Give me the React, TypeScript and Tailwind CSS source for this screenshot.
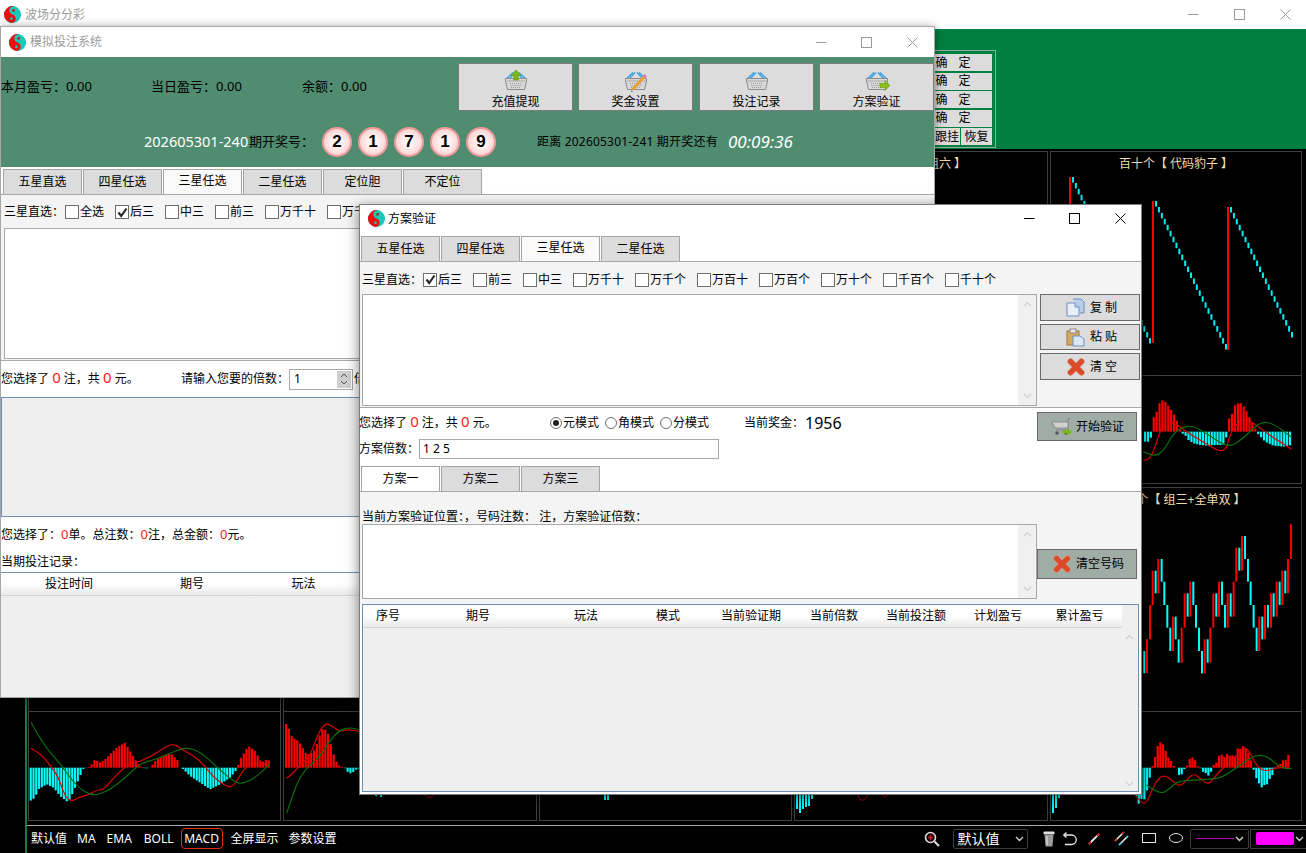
import React from "react";

type P = [number, number];

const C = "\uFF1A";
const D = "\uFF0C";

const interp = (pts: P[], x: number) => {
  if (x <= pts[0][0]) return pts[0][1];
  for (let i = 1; i < pts.length; i++) {
    if (x <= pts[i][0]) {
      const [a, b] = pts[i - 1];
      const [c, d] = pts[i];
      return b + ((d - b) * (x - a)) / (c - a);
    }
  }
  return pts[pts.length - 1][1];
};

const smooth = (pts: P[]) => {
  let d = `M${pts[0][0]} ${pts[0][1]}`;
  for (let i = 1; i < pts.length - 1; i++) {
    const mx = (pts[i][0] + pts[i + 1][0]) / 2;
    const my = (pts[i][1] + pts[i + 1][1]) / 2;
    d += ` Q${pts[i][0]} ${pts[i][1]} ${mx} ${my}`;
  }
  const l = pts[pts.length - 1];
  return d + ` L${l[0]} ${l[1]}`;
};

function Canvas({ x, y, w, h, children }: { x: number; y: number; w: number; h: number; children?: React.ReactNode }) {
  return (
    <svg className="block" width={w} height={h} viewBox={`${x} ${y} ${w} ${h}`}>
      {children}
    </svg>
  );
}

function Macd({
  ox, oy, axis, runs, red, green,
}: {
  ox: number; oy: number; axis: number;
  runs: { from: number; to: number; step: number; pts: P[] }[];
  red?: P[]; green?: P[];
}) {
  const rects: React.ReactNode[] = [];
  runs.forEach((r, ri) => {
    for (let zx = r.from, i = 0; zx <= r.to; zx += r.step, i++) {
      const v = interp(r.pts, zx);
      rects.push(
        <rect key={`${ri}-${i}`} x={zx - 3} width={6.5} y={v > 0 ? axis - v : axis} height={Math.abs(v)} fill={v > 0 ? "#ff0000" : "#00ffff"} />
      );
    }
  });
  return (
    <g transform={`translate(${ox} ${oy}) scale(0.3333)`}>
      {rects}
      {red && <path d={smooth(red)} fill="none" stroke="#e00000" strokeWidth={3.5} />}
      {green && <path d={smooth(green)} fill="none" stroke="#0a700a" strokeWidth={3.5} />}
    </g>
  );
}

function Stairs({ x0, y0, x1, y1 }: { x0: number; y0: number; x1: number; y1: number }) {
  const n = Math.round((x1 - x0) / 2.9);
  const out: React.ReactNode[] = [];
  for (let i = 0; i <= n; i++) {
    out.push(<rect key={i} x={x0 + ((x1 - x0) * i) / n} y={y0 + ((y1 - y0) * i) / n} width={2} height={5.5} fill="#00eef4" />);
  }
  return <>{out}</>;
}

const candles: [number, number, number, 0 | 1][] = [
  [343,513,580,0],[351,478,580,1],[360,375,478,1],[368,272,375,1],[377,272,340,0],[385,237,340,1],[395,237,305,0],[403,305,375,0],[412,375,443,0],[421,443,513,0],[429,410,513,1],[437,410,478,0],[446,478,548,0],[455,443,548,1],[464,340,443,1],[473,340,410,0],[481,305,410,1],[490,305,375,0],[498,375,443,0],[507,443,513,0],[516,513,580,0],[524,478,580,1],[533,478,548,0],[541,443,548,1],[550,340,443,1],[559,340,410,0],[567,305,410,1],[576,305,375,0],[585,375,443,0],[593,340,443,1],[602,340,410,0],[611,305,410,1],[619,203,305,1],[628,203,272,0],[636,168,272,1],[645,168,237,0],[654,237,305,0],[662,305,375,0],[671,375,443,0],[680,443,513,0],[688,410,513,1],[697,410,478,0],[705,375,478,1],[714,375,443,0],[723,340,443,1],[731,340,410,0],[740,305,410,1],[749,305,375,0],[757,272,375,1],[766,272,340,0],[774,237,340,1],[783,133,237,1],
];

function Panel({ title, titleClass, main, macd, x, y }: { title?: string; titleClass?: string; main?: React.ReactNode; macd?: React.ReactNode; x: number; y: number }) {
  return (
    <div className="flex flex-col border border-[#404040] bg-black overflow-hidden">
      <div className={`h-[23px] shrink-0 flex items-center justify-center text-[12px] text-[#f2dcae] whitespace-nowrap ${titleClass ?? ""}`}>{title}</div>
      <div className="h-[200px] shrink-0 overflow-hidden">
        <Canvas x={x} y={y + 24} w={252} h={200}>{main}</Canvas>
      </div>
      <div className="h-px shrink-0 bg-[#404040]" />
      <div className="flex-1 overflow-hidden">
        <Canvas x={x} y={y + 225} w={252} h={109}>{macd}</Canvas>
      </div>
    </div>
  );
}

function YinYang() {
  return (
    <svg width="17" height="17" viewBox="0 0 16 16" className="shrink-0">
      <g transform="rotate(15 8 8)">
        <circle cx="8" cy="8" r="8" fill="#18c8b8" />
        <path d="M8 0A8 8 0 0 0 8 16A4 4 0 0 0 8 8A4 4 0 0 1 8 0Z" fill="#ee1010" />
        <circle cx="8" cy="4" r="1.3" fill="#c81818" />
        <circle cx="8" cy="12" r="1.3" fill="#18c8b8" />
      </g>
    </svg>
  );
}

function WinControls({ color, width, nudge }: { color: string; width: string; nudge: string }) {
  return (
    <div className={`flex ml-auto ${nudge}`} style={{ color }}>
      <div className={`${width} flex items-center justify-center`}>
        <svg width="11" height="11" viewBox="0 0 11 11"><path d="M0 5.5H10.5" stroke="currentColor" /></svg>
      </div>
      <div className={`${width} flex items-center justify-center`}>
        <svg width="11" height="11" viewBox="0 0 11 11"><rect x="0.5" y="0.5" width="10" height="10" fill="none" stroke="currentColor" /></svg>
      </div>
      <div className={`${width} flex items-center justify-center`}>
        <svg width="11" height="11" viewBox="0 0 11 11"><path d="M0.5 0.5L10.5 10.5M10.5 0.5L0.5 10.5" stroke="currentColor" /></svg>
      </div>
    </div>
  );
}

function Basket({ extra }: { extra?: "up" | "pen" | "arrow" }) {
  return (
    <svg width="26" height="24" viewBox="0 0 26 24">
      <path d="M3 10L10 3.5M23 10L16 3.5M6 10L12 3.5M20 10L14 3.5" stroke="#3aa0e0" strokeWidth="1.3" fill="none" />
      <path d="M2.5 9.5H23.5V12L21.5 20.5H4.5L2.5 12Z" fill="#d8d8d8" stroke="#8c8c8c" />
      <path d="M3.5 12H22.5" stroke="#a8a8a8" />
      <path d="M7 14.5H19M7.5 16.5H18.5M8 18.5H18" stroke="#9a9a9a" strokeDasharray="1 1" />
      {extra === "up" && <path d="M13 1L18 6.5H15.3V11H10.7V6.5H8Z" fill="#79b818" stroke="#5a9010" strokeWidth="0.5" />}
      {extra === "pen" && (
        <>
          <path d="M22 7L9.5 20.5" stroke="#e8a030" strokeWidth="3" />
          <path d="M22.8 6.2L21 8" stroke="#e070c0" strokeWidth="3" />
          <path d="M8.8 21.5L8 23L10 22.5Z" fill="#444" />
        </>
      )}
      {extra === "arrow" && <path d="M16 14.5H21V11.5L26 16.5L21 21.5V18.5H16Z" fill="#8cc010" stroke="#608a10" strokeWidth="0.5" />}
    </svg>
  );
}

function TopButton({ label, extra, className }: { label: string; extra?: "up" | "pen" | "arrow"; className?: string }) {
  return (
    <div className={`w-[115px] h-[48px] bg-[#dcdcdc] border border-[#7c7c7c] flex flex-col items-center pt-[5px] text-[12px] text-black shrink-0 ${className ?? ""}`}>
      <div className="h-[24px]"><Basket extra={extra} /></div>
      <div className="leading-[14px] mt-[2px]">{label}</div>
    </div>
  );
}

function Ball({ n }: { n: number }) {
  return (
    <div className="w-[30px] h-[30px] rounded-full border-2 border-[#f29a9a] bg-[radial-gradient(circle,#fff4f4_25%,#fddcdc_60%,#f8b4b4_100%)] flex items-center justify-center font-['Liberation_Sans',sans-serif] font-bold text-[17px] text-black shrink-0">
      {n}
    </div>
  );
}

function Tab({ label, active, white }: { label: string; active?: boolean; white?: boolean }) {
  return (
    <div className={`w-[79px] h-[25px] border border-b-0 border-[#a4a4a4] flex items-center justify-center text-[12px] text-black shrink-0 ${active ? (white ? "bg-white" : "bg-[#f9f9f9] pb-[2px]") : "bg-[#dcdcdc]"}`}>
      {label}
    </div>
  );
}

function Check({ label, checked, w }: { label: string; checked?: boolean; w: string }) {
  return (
    <div className={`flex items-center shrink-0 ${w}`}>
      <div className="w-[14px] h-[14px] border border-[#6e6e6e] bg-white mr-px flex items-center justify-center shrink-0">
        {checked && (
          <svg width="11" height="11" viewBox="0 0 11 11"><path d="M1.5 5.5L4.2 9L9.5 1.5" fill="none" stroke="#222" strokeWidth="2.1" /></svg>
        )}
      </div>
      <span className="text-[12px] whitespace-nowrap">{label}</span>
    </div>
  );
}

function Radio({ label, on, w }: { label: string; on?: boolean; w: string }) {
  return (
    <div className={`flex items-center shrink-0 ${w}`}>
      <div className="w-[12px] h-[12px] rounded-full border border-[#6e6e6e] bg-white flex items-center justify-center mr-px shrink-0">
        {on && <div className="w-[6px] h-[6px] rounded-full bg-[#222]" />}
      </div>
      <span className="text-[12px] whitespace-nowrap">{label}</span>
    </div>
  );
}

function Scroll() {
  return (
    <div className="w-[18px] bg-[#f0f0f0] flex flex-col justify-between items-center py-[6px] shrink-0">
      <svg width="9" height="6" viewBox="0 0 9 6"><path d="M1 5L4.5 1.5L8 5" fill="none" stroke="#cfcfcf" strokeWidth="1.2" /></svg>
      <svg width="9" height="6" viewBox="0 0 9 6"><path d="M1 1L4.5 4.5L8 1" fill="none" stroke="#cfcfcf" strokeWidth="1.2" /></svg>
    </div>
  );
}

function XIcon({ size = 18 }: { size?: number }) {
  return (
    <svg width={size} height={size} viewBox="0 0 18 18">
      <path d="M3.5 3.5L14.5 14.5M14.5 3.5L3.5 14.5" stroke="#d09c88" strokeWidth="6.4" strokeLinecap="round" />
      <path d="M3.5 3.5L14.5 14.5M14.5 3.5L3.5 14.5" stroke="#dc4a2a" strokeWidth="5" strokeLinecap="round" />
    </svg>
  );
}

function SideButton({ icon, label, className }: { icon: React.ReactNode; label: string; className: string }) {
  return (
    <div className={`w-[100px] bg-[#dcdcdc] border border-[#6a6a6a] flex items-center pl-[25px] text-[12px] text-black ${className}`}>
      <div className="w-[19px] h-[19px] flex items-center justify-center shrink-0">{icon}</div>
      <span className="ml-[5px] whitespace-pre">{label}</span>
    </div>
  );
}

function GreenButton({ icon, label, className }: { icon: React.ReactNode; label: string; className?: string }) {
  return (
    <div className={`w-[100px] bg-[#9fada6] border border-[#6a6a6a] flex items-center pl-[13px] text-[12px] text-black shrink-0 ${className ?? ""}`}>
      <div className="w-[22px] h-[20px] flex items-center justify-center shrink-0">{icon}</div>
      <span className="ml-[3px] whitespace-nowrap">{label}</span>
    </div>
  );
}

function CopyIcon() {
  return (
    <svg width="19" height="19" viewBox="0 0 19 19">
      <path d="M7 1H15L18 4V15H14" fill="#b8cde8" stroke="#6f8fc4" />
      <path d="M1 5H9L13 9V18H1Z" fill="#e8eff8" stroke="#6f8fc4" />
      <path d="M9 5V9H13" fill="#c8d8ec" stroke="#6f8fc4" />
    </svg>
  );
}
function PasteIcon() {
  return (
    <svg width="19" height="19" viewBox="0 0 19 19">
      <rect x="1" y="3" width="12" height="14" fill="#d8a860" stroke="#a07838" />
      <rect x="4" y="1" width="6" height="4" fill="#e8e8e8" stroke="#888" />
      <path d="M7 8H14L18 11V18H7Z" fill="#d8e6f6" stroke="#6f8fc4" />
    </svg>
  );
}
function CartIcon() {
  return (
    <svg width="22" height="20" viewBox="0 0 22 20">
      <path d="M18 1L17 3V13H5" fill="none" stroke="#888" strokeWidth="1.2" />
      <path d="M1 5H17V11H4Z" fill="#dcdcdc" stroke="#888" />
      <path d="M4 7H16M4.5 9H16" stroke="#aaa" strokeDasharray="1 1" />
      <circle cx="6" cy="16" r="1.8" fill="#555" />
      <circle cx="15" cy="16" r="1.8" fill="#555" />
      <path d="M12 13.5H16.5V11L21 15L16.5 19V16.5H12Z" fill="#78b818" />
    </svg>
  );
}

function Red({ children }: { children: React.ReactNode }) {
  return <span className="text-[15px] text-[#ff1a1a] leading-none">{children}</span>;
}

function Sel({ className, children, chevron }: { className: string; children?: React.ReactNode; chevron?: string }) {
  return (
    <div className={`h-[20px] border border-[#3c3c3c] rounded-[2px] flex items-center shrink-0 ${className}`}>
      {children}
      <svg className={`ml-auto ${chevron ?? "mr-[4px]"}`} width="9" height="6" viewBox="0 0 9 6"><path d="M1 1L4.5 4.5L8 1" fill="none" stroke="#d0d0d0" strokeWidth="1.4" /></svg>
    </div>
  );
}

const p1: P[] = [[90,-100],[105,-90],[115,-65],[140,-50],[160,-60],[180,-85],[205,-105],[225,-60],[240,-25],[250,-3],[260,0],[270,3],[285,25],[300,15],[315,25],[330,40],[350,60],[375,75],[390,50],[405,25],[420,5],[435,-3],[450,0],[470,25],[495,40],[515,40],[535,20],[540,0],[550,-5],[570,-25],[600,-45],[630,-65],[660,-50],[690,-30],[705,-12],[712,0],[720,25],[745,65],[765,50],[785,15],[800,25],[812,20]];
const p2: P[] = [[855,135],[865,120],[875,95],[885,85],[895,80],[905,65],[915,45],[925,40],[935,45],[945,55],[955,85],[965,115],[975,115],[985,100],[995,60],[1005,25],[1015,8],[1025,3],[1035,-2],[1045,-15],[1055,-18],[1065,-8],[1075,-3]];
const p5: P[] = [[733,-95],[741,-68],[749,-30],[757,5],[765,32],[773,65],[781,76],[789,70],[797,50],[805,30],[813,20],[821,5],[829,0],[836,-22],[844,-22],[852,-5],[860,3],[868,25],[876,32],[884,25],[892,5],[900,0],[908,-12],[916,-15],[924,-25],[932,-15],[940,8],[948,12],[956,35],[964,40],[972,30],[980,42],[988,35],[996,38],[1004,30],[1012,58],[1020,55],[1028,65],[1036,60],[1044,48],[1052,25],[1060,-3],[1068,-30],[1076,-45],[1084,-60],[1092,-52],[1100,-52],[1108,-35],[1116,-25],[1124,-5],[1132,5],[1140,10],[1148,22],[1156,22],[1164,35],[1172,60]];
const p5top: P[] = [[1035,-30],[1052,-30],[1054,30],[1070,60],[1080,90],[1090,95],[1100,85],[1110,70],[1120,55],[1130,35],[1140,5],[1146,-5],[1155,-10],[1165,-25],[1180,-35],[1200,-40],[1220,-42],[1240,-40],[1260,-40],[1278,-38],[1280,30],[1295,50],[1305,80],[1320,88],[1335,70],[1350,40],[1365,10],[1372,-5],[1395,-30],[1420,-42],[1450,-45],[1475,-40]];

const mainCols: [string, string][] = [["投注时间", "w-[136px]"], ["期号", "w-[110px]"], ["玩法", "w-[113px]"]];
const dlgCols: [string, string][] = [["序号","w-[50px]"],["期号","w-[130px]"],["玩法","w-[86px]"],["模式","w-[78px]"],["当前验证期","w-[88px]"],["当前倍数","w-[78px]"],["当前投注额","w-[86px]"],["计划盈亏","w-[78px]"],["累计盈亏","w-[85px]"]];

const bit = (x: number, h: number) => <rect key={x} x={x} y={790} width={2} height={h - 790} fill="#00ffff" />;

export default function App() {
  return (
    <div className="relative w-[1306px] h-[853px] overflow-hidden bg-black flex flex-col font-['Noto_Sans','Noto_Sans_CJK_SC',sans-serif] text-black">
      {/* app title */}
      <div className="h-[29px] bg-white shrink-0 flex items-center pl-[4px]">
        <YinYang />
        <span className="ml-[4px] text-[12px] text-[#9c9c9c]">波场分分彩</span>
        <WinControls color="#9a9a9a" width="w-[46px]" nudge="mr-[-2px]" />
      </div>
      {/* green band */}
      <div className="h-[120px] bg-[#008040] shrink-0 flex justify-end pr-[310px] pt-[21px]">
        <div className="w-[84px] h-[98px] border border-[#8fae9f] p-[3px] flex flex-col gap-[1.5px] text-[12px]">
          {[0, 1, 2, 3].map((i) => (
            <div key={i} className="h-[17px] bg-[#dcdcdc] flex items-center justify-center gap-[11px] pr-[2px]">
              <span>确</span><span>定</span>
            </div>
          ))}
          <div className="h-[17px] flex gap-[1px]">
            <div className="flex-1 bg-[#dcdcdc] text-right pr-[1px] leading-[17px]">跟挂</div>
            <div className="w-[31px] bg-[#dcdcdc] text-center leading-[17px]">恢复</div>
          </div>
        </div>
      </div>
      {/* chart area */}
      <div className="flex-1 flex bg-black">
        <div className="w-[25px] shrink-0" />
        <div className="w-[2px] bg-[#0b8048] shrink-0" />
        <div className="flex-1 flex flex-col pt-[2px]">
          <div className="pl-[1px] grid grid-cols-[253px_254px_253px_254px_252px] grid-rows-[333px_334px] gap-x-[2px] gap-y-[3px]">
            <Panel x={29} y={151} />
            <Panel x={284} y={151} />
            <Panel x={540} y={151} />
            <Panel x={795} y={151} title="千百十【 组六 】" />
            <Panel
              x={1051}
              y={151}
              title="百十个【 代码豹子 】"
              main={
                <>
                  <rect x={1069} y={177} width={2} height={170} fill="#ff0000" />
                  <Stairs x0={1072} y0={177} x1={1149} y1={338} />
                  <rect x={1152} y={201} width={2} height={142} fill="#ff0000" />
                  <Stairs x0={1155} y0={201} x1={1225} y1={344} />
                  <rect x={1227} y={207} width={2} height={143} fill="#ff0000" />
                  <Stairs x0={1230} y0={207} x1={1291} y1={332} />
                </>
              }
              macd={
                <Macd
                  ox={800}
                  oy={200}
                  axis={695}
                  runs={[{ from: 1035, to: 1475, step: 8.7, pts: p5top }]}
                  red={[[1030,780],[1050,785],[1075,710],[1090,675],[1120,665],[1150,690],[1200,720],[1275,765],[1290,700],[1320,660],[1350,660],[1400,700],[1475,748]]}
                  green={[[1030,755],[1060,770],[1090,755],[1120,700],[1150,680],[1180,678],[1220,700],[1285,745],[1330,715],[1380,665],[1420,670],[1475,712]]}
                />
              }
            />
            <Panel
              x={29}
              y={487}
              macd={
                <Macd
                  ox={0}
                  oy={690}
                  axis={233}
                  runs={[{ from: 92, to: 812, step: 8.3, pts: p1 }]}
                  red={[[93,175],[120,190],[150,225],[175,260],[195,320],[215,335],[240,320],[265,315],[290,300],[310,300],[340,265],[380,225],[420,215],[460,195],[490,175],[520,160],[550,180],[600,210],[640,262],[680,290],[700,290],[730,240],[755,218],[780,225],[810,222]]}
                  green={[[93,97],[130,165],[180,220],[230,290],[280,320],[330,300],[380,260],[420,220],[470,208],[520,185],[560,172],[600,185],[650,230],[700,275],[730,282],[770,260],[810,222]]}
                />
              }
            />
            <Panel
              x={284}
              y={487}
              macd={
                <>
                  <Macd
                    ox={0}
                    oy={690}
                    axis={233}
                    runs={[{ from: 858, to: 1078, step: 8.4, pts: p2 }]}
                    red={[[860,265],[880,250],[900,225],[930,200],[950,140],[975,98],[1000,110],[1020,125],[1045,118],[1080,125]]}
                    green={[[860,370],[880,310],[900,260],[930,225],[960,200],[990,150],[1020,120],[1050,112],[1080,120]]}
                  />
                  {bit(375, 796)}
                  {bit(380, 797)}
                  <path d="M424 794Q429 801 434 794" fill="none" stroke="#c00000" />
                </>
              }
            />
            <Panel
              x={540}
              y={487}
              macd={<>{bit(604, 800)}{bit(607, 800)}</>}
            />
            <Panel
              x={795}
              y={487}
              macd={
                <>
                  {bit(796, 809)}
                  {bit(799, 813)}
                  {bit(802, 809)}
                  {bit(805, 807)}
                  {bit(808, 806)}
                  {bit(811, 799)}
                  <path d="M857 794Q862 807 868 794" fill="none" stroke="#c00000" />
                  <path d="M882 794Q885 800 888 794" fill="none" stroke="#c00000" />
                </>
              }
            />
            <Panel
              x={1051}
              y={487}
              title="百十个【 组三+全单双 】"
              titleClass="pl-[6px]"
              main={
                <g transform="translate(1030 480) scale(0.3333)">
                  {candles.map(([x, a, b, r], i) => (
                    <rect key={i} x={x - 3} y={a} width={6} height={b - a} fill={r ? "#ff0000" : "#00ffff"} />
                  ))}
                </g>
              }
              macd={
                <>
                  {bit(1052, 813)}
                  {bit(1055, 808)}
                  {bit(1058, 798)}
                  <Macd
                    ox={900}
                    oy={690}
                    axis={233}
                    runs={[{ from: 708, to: 726, step: 8, pts: [[708, -85], [716, -108], [726, -90]] }, { from: 733, to: 1172, step: 8, pts: p5 }]}
                    red={[[705,315],[725,340],[740,340],[755,300],[780,258],[800,258],[820,275],[840,290],[860,270],[880,250],[900,265],[925,285],[945,260],[970,232],[1000,210],[1030,168],[1050,185],[1070,230],[1100,245],[1130,232],[1170,235]]}
                    green={[[740,285],[780,315],[810,295],[835,272],[900,270],[960,265],[1000,240],[1050,205],[1080,193],[1110,205],[1145,235],[1175,235]]}
                  />
                </>
              }
            />
          </div>
          {/* toolbar */}
          <div className="mt-[4px] flex-1 border-t border-[#a8a8a8] flex items-center text-[12px] text-white pl-[4px] pb-[2px]">
            <span>默认值</span>
            <span className="ml-[10px]">MA</span>
            <span className="ml-[11px]">EMA</span>
            <span className="ml-[12px]">BOLL</span>
            <span className="ml-[7px] w-[42px] h-[21px] border border-[#e03010] rounded-[4px] flex items-center justify-center">MACD</span>
            <span className="ml-[8px]">全屏显示</span>
            <span className="ml-[10px]">参数设置</span>
            <svg className="ml-[587px] shrink-0" width="16" height="16" viewBox="0 0 16 16">
              <circle cx="6.5" cy="6.5" r="5" fill="none" stroke="#e0e0e0" strokeWidth="1.6" />
              <path d="M6.5 3.5V9.5M4 6.5H9" stroke="#d02020" strokeWidth="1.4" />
              <path d="M10.5 10.5L15 15" stroke="#d8d8d8" strokeWidth="2.2" />
            </svg>
            <Sel className="ml-[13px] w-[75px]" chevron="mr-[3px]">
              <span className="ml-[4px] text-[14px]">默认值</span>
            </Sel>
            <svg className="ml-[15px] shrink-0" width="12" height="16" viewBox="0 0 12 16">
              <rect x="0.5" y="0.5" width="11" height="3" rx="1" fill="#e0e0e0" />
              <path d="M1.5 4H10.5L9.5 15.5H2.5Z" fill="#9a9a9a" />
              <path d="M4 5V14" stroke="#cfcfcf" strokeWidth="1.5" />
            </svg>
            <svg className="ml-[8px] shrink-0" width="14" height="14" viewBox="0 0 14 14">
              <path d="M1 3H8.5A4.5 4.5 0 0 1 8.5 12.5H2" fill="none" stroke="#e8e8e8" strokeWidth="1.3" />
              <path d="M3.5 0.5L0.8 3L3.5 5.5" fill="none" stroke="#e8e8e8" strokeWidth="1.3" />
            </svg>
            <svg className="ml-[11px] shrink-0" width="12" height="12" viewBox="0 0 12 12">
              <path d="M1 11L11 1" stroke="#e8e8e8" strokeWidth="1.8" />
              <path d="M1 11L3 9M9 3L11 1" stroke="#e01010" strokeWidth="1.8" />
            </svg>
            <svg className="ml-[14px] shrink-0" width="15" height="15" viewBox="0 0 15 15">
              <path d="M1 10L10 1" stroke="#e8e8e8" strokeWidth="1.6" />
              <path d="M5 14L14 5" stroke="#e8e8e8" strokeWidth="1.6" />
              <path d="M1 10L3 8M8 3L10 1" stroke="#e01010" strokeWidth="1.6" />
              <path d="M5 14L7 12M12 7L14 5" stroke="#10d0d0" strokeWidth="1.6" />
            </svg>
            <svg className="ml-[13px] shrink-0" width="14" height="11" viewBox="0 0 14 11"><rect x="0.5" y="0.5" width="13" height="9" fill="none" stroke="#e8e8e8" /></svg>
            <svg className="ml-[13px] shrink-0" width="14" height="11" viewBox="0 0 14 11"><ellipse cx="7" cy="5" rx="6.5" ry="4.5" fill="none" stroke="#e8e8e8" /></svg>
            <Sel className="ml-[7px] w-[59px]">
              <div className="ml-[5px] w-[38px] h-[1px] bg-[#c000c0]" />
            </Sel>
            <Sel className="ml-[1px] flex-1 min-w-0 border-r-0 rounded-none" chevron="mr-[2px]">
              <div className="ml-[5px] w-[38px] h-[13px] rounded-[2px] bg-[#ff00ff]" />
            </Sel>
          </div>
        </div>
      </div>

      {/* main window */}
      <div className="absolute left-0 top-[26px] w-[935px] h-[672px] bg-white border border-[#a6a6a6] flex flex-col shadow-[0_2px_10px_rgba(0,0,0,0.45)]">
        <div className="h-[30px] shrink-0 flex items-center pl-[8px]">
          <YinYang />
          <span className="ml-[4px] text-[12px] text-[#9c9c9c]">模拟投注系统</span>
          <WinControls color="#9a9a9a" width="w-[45.5px]" nudge="mr-[-1px]" />
        </div>
        <div className="h-[110px] shrink-0 bg-[#508c70] flex flex-col">
          <div className="h-[54px] pt-[6px] flex">
            <div className="flex items-center h-[48px] text-[13px] whitespace-nowrap">
              <div className="w-[150px]">本月盈亏{C}0.00</div>
              <div className="w-[151px]">当日盈亏{C}0.00</div>
              <div>余额{C}0.00</div>
            </div>
            <div className="ml-auto flex">
              <TopButton label="充值提现" extra="up" />
              <TopButton label="奖金设置" extra="pen" className="ml-[5px]" />
              <TopButton label="投注记录" className="ml-[6px]" />
              <TopButton label="方案验证" extra="arrow" className="ml-[5px]" />
            </div>
          </div>
          <div className="flex-1 flex items-center pt-[6px] whitespace-nowrap">
            <span className="ml-[143px] text-[14.5px] text-white w-[105px]">202605301-240</span>
            <span className="text-[13px] w-[73px]">期开奖号{C}</span>
            <div className="flex gap-[6px]">
              {[2, 1, 7, 1, 9].map((n, i) => <Ball key={i} n={n} />)}
            </div>
            <span className="ml-[41px] text-[12px] tracking-[0.2px] w-[191px]">距离 202605301-241 期开奖还有</span>
            <span className="text-[17px] italic text-white">00:09:36</span>
          </div>
        </div>
        <div className="h-[27px] shrink-0 pt-[2px] pl-[2px] flex gap-px items-end">
          <Tab label="五星直选" />
          <Tab label="四星任选" />
          <Tab label="三星任选" active />
          <Tab label="二星任选" />
          <Tab label="定位胆" />
          <Tab label="不定位" />
        </div>
        <div className="h-[167px] shrink-0 border-t border-b border-[#a8a8a8] bg-[#f4f4f4] flex flex-col">
          <div className="h-[33px] shrink-0 flex items-center pl-[3px] pt-[1px]">
            <span className="w-[61px] text-[12px] whitespace-nowrap">三星直选{C}</span>
            <Check label="全选" w="w-[50px]" />
            <Check label="后三" checked w="w-[50px]" />
            <Check label="中三" w="w-[50px]" />
            <Check label="前三" w="w-[50px]" />
            <Check label="万千十" w="w-[62px]" />
            <Check label="万千个" w="w-[62px]" />
          </div>
          <div className="h-[131px] mx-[3px] bg-white border border-[#a8a8a8]" />
        </div>
        <div className="h-[36px] shrink-0 flex items-center text-[12px] whitespace-pre">
          <span className="w-[180px]">您选择了 <Red>0</Red> 注{D}共 <Red>0</Red> 元。</span>
          <span className="w-[108px]">请输入您要的倍数{C}</span>
          <div className="w-[64px] h-[21px] border border-[#a8a8a8] bg-white flex items-center pl-[4px] text-[12px]">
            1
            <div className="ml-auto mr-[1px] w-[14px] h-[17px] bg-[#cfcfcf] flex flex-col items-center justify-center gap-[2px]">
              <svg width="8" height="5" viewBox="0 0 8 5"><path d="M1 4L4 1L7 4" fill="none" stroke="#555" /></svg>
              <svg width="8" height="5" viewBox="0 0 8 5"><path d="M1 1L4 4L7 1" fill="none" stroke="#555" /></svg>
            </div>
          </div>
          <span className="ml-px">倍</span>
        </div>
        <div className="h-[120px] shrink-0 bg-[#efefef] border border-[#6d8fb0]" />
        <div className="h-[35px] shrink-0 flex items-center text-[12px] whitespace-pre">
          <span>您选择了{C}<span className="text-[#ff1a1a] text-[13px]">0</span>单。总注数{C}<span className="text-[#ff1a1a] text-[13px]">0</span>注{D}总金额{C}<span className="text-[#ff1a1a] text-[13px]">0</span>元。</span>
        </div>
        <div className="h-[20px] shrink-0 flex items-center text-[12px]">当期投注记录{C}</div>
        <div className="flex-1 border-t border-[#6d8fb0] bg-[#efefef] flex flex-col">
          <div className="h-[23px] shrink-0 flex bg-[linear-gradient(#ffffff_45%,#eaeaea)] border-b border-[#d4d4d4] text-[12px] items-center">
            {mainCols.map(([t, w]) => <div key={t} className={`${w} text-center`}>{t}</div>)}
          </div>
        </div>
      </div>

      {/* dialog */}
      <div className="absolute left-[359px] top-[204px] w-[783px] h-[591px] bg-white border border-[#7d7d7d] flex flex-col shadow-[0_3px_12px_rgba(0,0,0,0.5)]">
        <div className="h-[31px] shrink-0 flex items-center pl-[8px] pb-[4px]">
          <YinYang />
          <span className="ml-[3px] text-[12px]">方案验证</span>
          <WinControls color="#000" width="w-[45.5px]" nudge="mr-[-2px]" />
        </div>
        <div className="h-[25px] shrink-0 pl-[1px] flex gap-px">
          <Tab label="五星任选" />
          <Tab label="四星任选" />
          <Tab label="三星任选" active />
          <Tab label="二星任选" />
        </div>
        <div className="h-[147px] shrink-0 border-t border-b border-[#a8a8a8] bg-[#f4f4f4] flex flex-col">
          <div className="h-[32px] shrink-0 flex items-center pl-[2px] pt-[3px]">
            <span className="w-[61px] text-[12px] whitespace-nowrap">三星直选{C}</span>
            <Check label="后三" checked w="w-[50px]" />
            <Check label="前三" w="w-[50px]" />
            <Check label="中三" w="w-[50px]" />
            <Check label="万千十" w="w-[62px]" />
            <Check label="万千个" w="w-[62px]" />
            <Check label="万百十" w="w-[62px]" />
            <Check label="万百个" w="w-[62px]" />
            <Check label="万十个" w="w-[62px]" />
            <Check label="千百个" w="w-[62px]" />
            <Check label="千十个" w="w-[62px]" />
          </div>
          <div className="flex pl-[2px]">
            <div className="w-[675px] h-[112px] bg-white border border-[#a8a8a8] flex justify-end">
              <Scroll />
            </div>
            <div className="ml-[3px] flex flex-col">
              <SideButton icon={<CopyIcon />} label="复 制" className="h-[27px]" />
              <SideButton icon={<PasteIcon />} label="粘 贴" className="h-[26px] mt-[3px]" />
              <SideButton icon={<XIcon />} label="清 空" className="h-[27px] mt-[3px]" />
            </div>
          </div>
        </div>
        <div className="h-[29px] shrink-0 flex text-[12px] whitespace-pre">
          <div className="flex items-center h-[29px] ml-[-1px]">
            <span className="w-[191px]">您选择了 <Red>0</Red> 注{D}共 <Red>0</Red> 元。</span>
            <Radio label="元模式" on w="w-[55px]" />
            <Radio label="角模式" w="w-[55px]" />
            <Radio label="分模式" w="w-[84px]" />
            <span className="w-[61px]">当前奖金{C}</span>
            <span className="text-[16px]">1956</span>
          </div>
          <GreenButton icon={<CartIcon />} label="开始验证" className="ml-auto mr-[4px] mt-[4px] h-[29px]" />
        </div>
        <div className="h-[24px] shrink-0 flex items-center text-[12px] ml-[-1px]">
          <span className="w-[60px] shrink-0 whitespace-nowrap">方案倍数{C}</span>
          <div className="w-[300px] h-[20px] border border-[#a8a8a8] flex items-center pl-[3px]">1 2 5</div>
        </div>
        <div className="h-[30px] shrink-0 pl-[1px] flex gap-px items-end">
          <Tab label="方案一" active white />
          <Tab label="方案二" />
          <Tab label="方案三" />
        </div>
        <div className="h-[113px] shrink-0 border-t border-[#a8a8a8] bg-[#f4f4f4] flex flex-col pl-[2px]">
          <div className="h-[32px] shrink-0 flex items-end text-[12px] leading-[14px] whitespace-pre">当前方案验证位置{C}{D}号码注数{C} 注{D}方案验证倍数{C}</div>
          <div className="flex items-start">
            <div className="w-[675px] h-[75px] bg-white border border-[#a8a8a8] flex justify-end">
              <Scroll />
            </div>
            <GreenButton icon={<XIcon />} label="清空号码" className="mt-[25px] h-[30px]" />
          </div>
        </div>
        <div className="mx-[2px] mb-[2px] flex-1 border border-[#6d8fb0] bg-[#efefef] flex flex-col">
          <div className="flex">
            <div className="h-[23px] w-[759px] shrink-0 flex bg-[linear-gradient(#ffffff_45%,#eaeaea)] border-b border-[#d4d4d4] text-[12px] items-center">
              {dlgCols.map(([t, w], i) => <div key={i} className={`${w} text-center shrink-0`}>{t}</div>)}
            </div>
          </div>
          <div className="flex-1 flex justify-end">
            <div className="w-[18px] flex flex-col justify-between items-center pt-[6px] pb-[4px]">
              <svg width="9" height="6" viewBox="0 0 9 6"><path d="M1 5L4.5 1.5L8 5" fill="none" stroke="#cfcfcf" strokeWidth="1.2" /></svg>
              <svg width="9" height="6" viewBox="0 0 9 6"><path d="M1 1L4.5 4.5L8 1" fill="none" stroke="#cfcfcf" strokeWidth="1.2" /></svg>
            </div>
          </div>
        </div>
      </div>
    </div>
  );
}
